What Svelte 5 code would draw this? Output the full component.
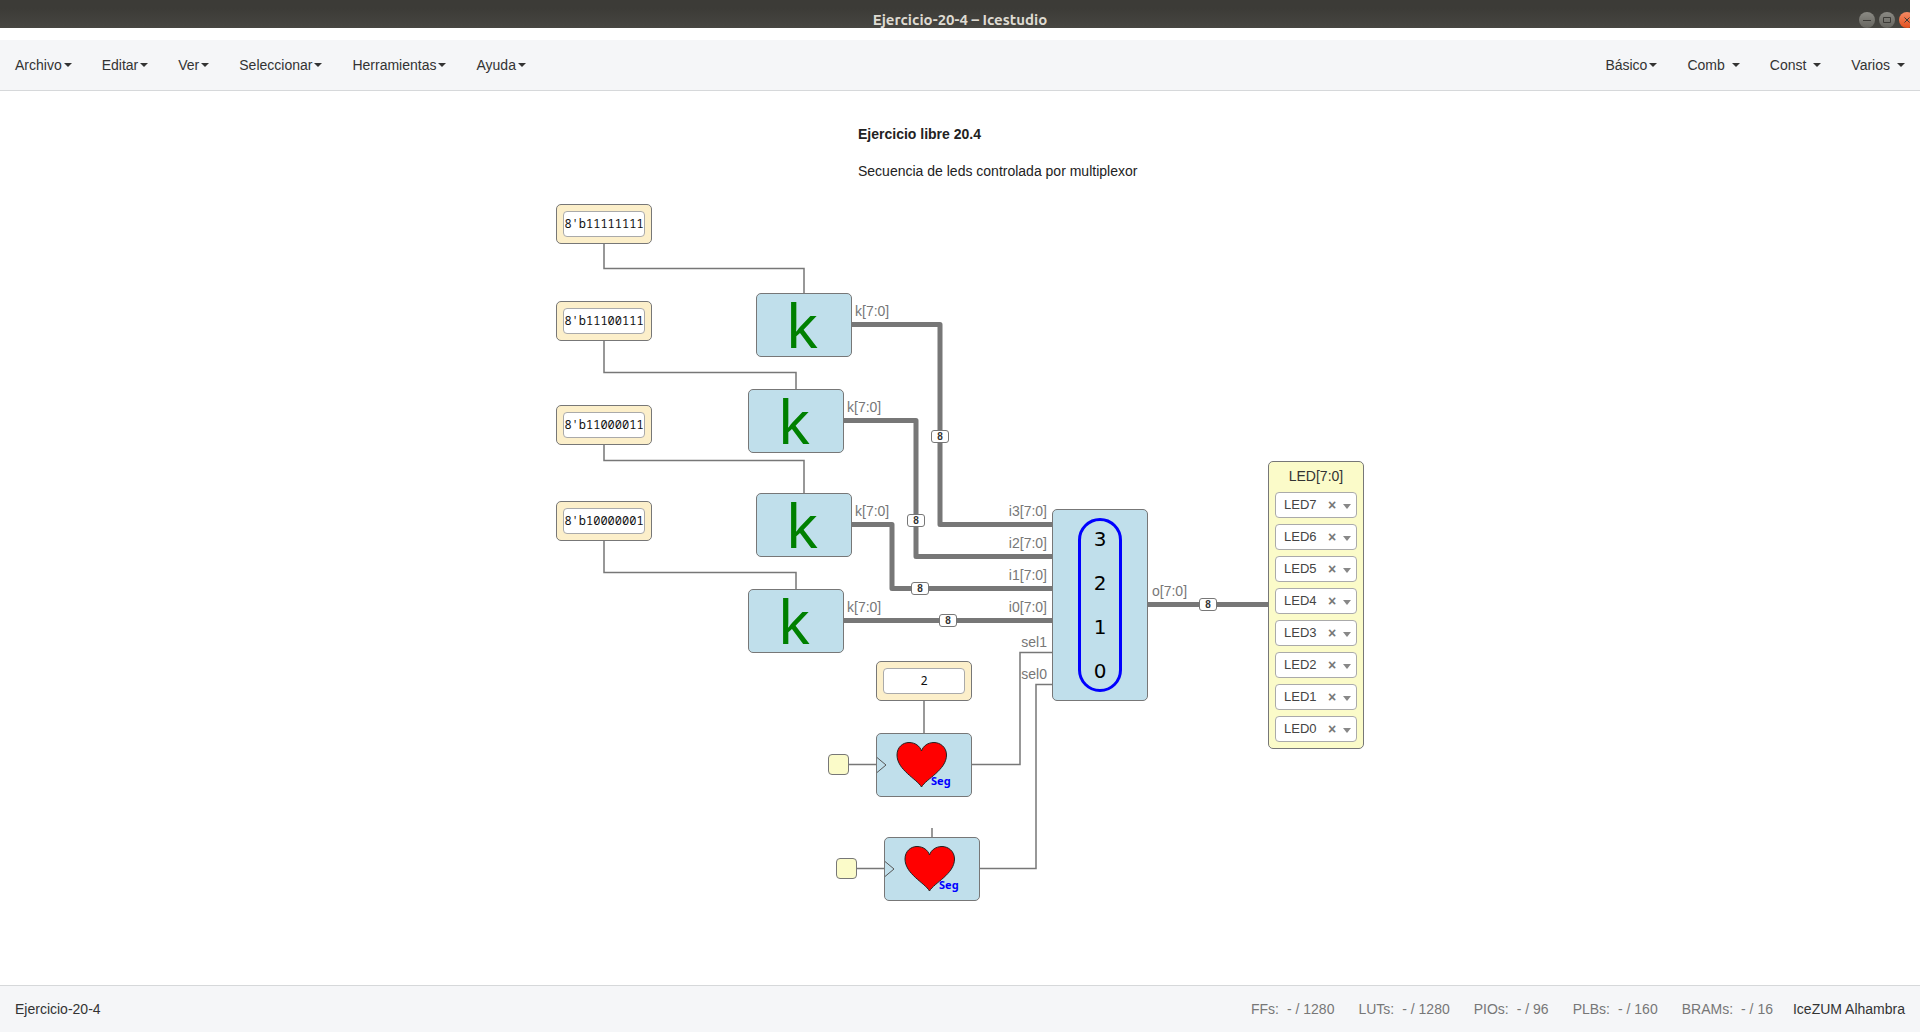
<script>
  const leftMenus = ['Archivo', 'Editar', 'Ver', 'Seleccionar', 'Herramientas', 'Ayuda'];
  const rightMenus = ['Básico', 'Comb', 'Const', 'Varios'];

  const resources = [
    { name: 'FFs', value: '- / 1280' },
    { name: 'LUTs', value: '- / 1280' },
    { name: 'PIOs', value: '- / 96' },
    { name: 'PLBs', value: '- / 160' },
    { name: 'BRAMs', value: '- / 16' }
  ];

  const constants = [
    { x: 0, y: 113, value: "8'b11111111" },
    { x: 0, y: 210, value: "8'b11100111" },
    { x: 0, y: 314, value: "8'b11000011" },
    { x: 0, y: 410, value: "8'b10000001" },
    { x: 320, y: 570, value: '2' }
  ];

  const kBlocks = [
    { x: 200, y: 202 },
    { x: 192, y: 298 },
    { x: 200, y: 402 },
    { x: 192, y: 498 }
  ];

  const hearts = [
    { x: 320, y: 642 },
    { x: 328, y: 746 }
  ];

  const clocks = [
    { x: 272, y: 663 },
    { x: 280, y: 767 }
  ];

  const muxInputs = [
    { text: 'i3[7:0]', y: 410 },
    { text: 'i2[7:0]', y: 442 },
    { text: 'i1[7:0]', y: 474 },
    { text: 'i0[7:0]', y: 506 },
    { text: 'sel1', y: 541 },
    { text: 'sel0', y: 573 }
  ];

  const outputs = [
    { text: 'k[7:0]', x: 299, y: 210 },
    { text: 'k[7:0]', x: 291, y: 306 },
    { text: 'k[7:0]', x: 299, y: 410 },
    { text: 'k[7:0]', x: 291, y: 506 },
    { text: 'o[7:0]', x: 596, y: 490 }
  ];

  const wires = [
    'M48 153V177.500H248V202',
    'M48 250V281.500H240V298',
    'M48 354V369.500H248V402',
    'M48 450V481.500H240V498',
    'M368 610V642',
    'M376 737V746',
    'M292 673.500H320',
    'M300 777.500H328',
    'M416 673.500H464V561.500H496',
    'M424 777.500H480V593.500H496'
  ];

  const buses = [
    'M296 233.500H384V433.500H496',
    'M288 329.500H360V465.500H496',
    'M296 433.500H336V497.500H496',
    'M288 529.500H496',
    'M592 513.500H712'
  ];

  const sizes = [
    { x: 375, y: 339 },
    { x: 351, y: 423 },
    { x: 355, y: 491 },
    { x: 383, y: 523 },
    { x: 643, y: 507 }
  ];

  const leds = [7, 6, 5, 4, 3, 2, 1, 0];
  const ledNames = leds.map((n) => `LED${n}`);
</script>

<div class="app">
  <header class="titlebar">
    <h1>Ejercicio-20-4 – Icestudio</h1>
    <div class="window-buttons">
      <button aria-label="Minimizar">
        <svg viewBox="0 0 16 16"><path d="M4 8.500h8" /></svg>
      </button>
      <button aria-label="Maximizar">
        <svg viewBox="0 0 16 16"><path d="M4.500 5.500h7v5h-7z" /></svg>
      </button>
      <button class="close" aria-label="Cerrar">
        <svg viewBox="0 0 16 16"><path d="M5.500 5.500l5 5M10.500 5.500l-5 5" /></svg>
      </button>
    </div>
  </header>

  <nav class="menubar">
    <div class="menus">
      {#each leftMenus as menu}
        <button>{menu}<span class="caret"></span></button>
      {/each}
    </div>
    <div class="menus right">
      {#each rightMenus as menu}
        <button>{menu}<span class="caret"></span></button>
      {/each}
    </div>
  </nav>

  <main>
    <div class="stage">
      <svg class="wiring" viewBox="0 0 808 894" aria-hidden="true">
        {#each wires as d}<path class="wire" {d} />{/each}
        {#each buses as d}<path class="bus" {d} />{/each}
      </svg>

      <section class="info">
        <h2>Ejercicio libre 20.4</h2>
        <p>Secuencia de leds controlada por multiplexor</p>
      </section>

      {#each sizes as s}
        <span class="size" style:left="{s.x}px" style:top="{s.y}px">8</span>
      {/each}

      {#each constants as c}
        <div class="constant" style:left="{c.x}px" style:top="{c.y}px">
          <input type="text" aria-label="Constante" value={c.value} />
        </div>
      {/each}

      {#each kBlocks as b}
        <div class="block" style:left="{b.x}px" style:top="{b.y}px">
          <span class="k">k</span>
        </div>
      {/each}

      {#each hearts as h}
        <div class="block" style:left="{h.x}px" style:top="{h.y}px">
          <svg class="heart" viewBox="0 0 94 62" aria-hidden="true">
            <path class="clock-mark" d="M0 23.500L9 31 0 38.500" />
            <path
              class="heart-shape"
              d="M44.500 53C40 45 20 36 20 21C20 13 26 8.500 32 8.500C38 8.500 43 12 44.500 17C46 12 51 8.500 57 8.500C63 8.500 69.500 13 69.500 21C69.500 36 49 45 44.500 53Z"
            />
          </svg>
          <span class="seg">Seg</span>
        </div>
      {/each}

      {#each clocks as c}
        <div class="clock" style:left="{c.x}px" style:top="{c.y}px"></div>
      {/each}

      {#each muxInputs as p}
        <span class="port in" style:top="{p.y}px">{p.text}</span>
      {/each}
      {#each outputs as p}
        <span class="port" style:left="{p.x}px" style:top="{p.y}px">{p.text}</span>
      {/each}

      <div class="block mux">
        <div class="oval">
          <span>3</span><span>2</span><span>1</span><span>0</span>
        </div>
      </div>

      <div class="led-block">
        <span class="led-title">LED[7:0]</span>
        {#each ledNames as name}
          <div class="pin">
            <select aria-label={name} value={name}>
              {#each ledNames as option}<option>{option}</option>{/each}
            </select>
            <button aria-label="Quitar {name}">×</button>
            <span class="arrow"></span>
          </div>
        {/each}
      </div>
    </div>
  </main>

  <footer>
    <span>Ejercicio-20-4</span>
    <div class="status">
      <div class="resources">
        {#each resources as r}
          <span class="resource"><span>{r.name}:</span><span>{r.value}</span></span>
        {/each}
      </div>
      <span>IceZUM Alhambra</span>
    </div>
  </footer>
</div>

<style>
  :global(body) {
    margin: 0;
    background: #fff;
  }

  .app,
  .app :is(button, input, select) {
    font-family: 'Liberation Sans', Arial, sans-serif;
    font-size: 14px;
    line-height: 20px;
    color: #333;
    box-sizing: border-box;
  }

  .app {
    min-height: 100vh;
    display: flex;
    flex-direction: column;
  }

  .app button {
    border: 0;
    padding: 0;
    background: none;
  }

  .titlebar {
    display: grid;
    grid-template-columns: 1fr auto 1fr;
    height: 28px;
    margin-right: 10px;
    margin-bottom: 12px;
    padding-left: 10px;
    overflow: hidden;
    background: linear-gradient(#3c3b37, #3c3b37 30%, #474641);
  }

  .titlebar h1 {
    grid-column: 2;
    margin: 10px 0 0;
    font: 700 15px/20px Ubuntu, 'Noto Sans', sans-serif;
    color: #dfdbd2;
    white-space: nowrap;
  }

  .window-buttons {
    display: flex;
    justify-content: flex-end;
    gap: 4px;
    margin: 12px -5px 0 0;
  }

  .app .window-buttons button {
    width: 16px;
    height: 16px;
    border-radius: 50%;
    background: linear-gradient(#8b8a84, #65645e);
  }

  .app .window-buttons .close {
    background: linear-gradient(#f58a64, #e2501f);
  }

  .window-buttons svg {
    display: block;
    fill: none;
    stroke: #3c3b37;
  }

  .menubar {
    display: flex;
    justify-content: space-between;
    padding: 15px;
    background: #f5f6f8;
    border-bottom: 1px solid #d6d8da;
  }

  .menus {
    display: flex;
    gap: 30px;
  }

  .menus button {
    display: flex;
    align-items: center;
    gap: 2px;
  }

  .menus.right button:not(:first-child) {
    gap: 7px;
  }

  .caret {
    border: 4px solid transparent;
    border-top-color: #333;
    border-bottom: 0;
  }

  main {
    flex: 1;
    overflow: hidden;
  }

  .stage {
    position: relative;
    width: 808px;
    height: 894px;
    margin: 0 auto;
  }

  .stage > * {
    position: absolute;
    box-sizing: border-box;
  }

  .wiring {
    inset: 0;
    fill: none;
    stroke: #777;
  }

  .wire {
    stroke-width: 1.5;
  }

  .bus {
    stroke-width: 5;
    stroke-linejoin: round;
  }

  .info {
    left: 302px;
    top: 33px;
    white-space: nowrap;
    color: #222;
  }

  .info h2 {
    margin: 0 0 17px;
    font-size: 14px;
  }

  .info p {
    margin: 0;
  }

  .size {
    width: 18px;
    height: 13px;
    border: 1px solid #777;
    border-radius: 3px;
    background: #fff;
    font: 700 10px/11px 'Liberation Sans', sans-serif;
    text-align: center;
  }

  .constant {
    width: 96px;
    height: 40px;
    padding: 6px;
    border: 1px solid #777;
    border-radius: 5px;
    background: #fcefca;
  }

  .app .constant input {
    display: block;
    width: 100%;
    height: 26px;
    padding: 0 0 2px;
    border: 1px solid #aaa;
    border-radius: 4px;
    background: #fff;
    font-family: 'Noto Sans Mono', 'DejaVu Sans Mono', monospace;
    font-size: 12px;
    color: #111;
    text-align: center;
  }

  .block {
    width: 96px;
    height: 64px;
    border: 1px solid #777;
    border-radius: 5px;
    background: #c0dfeb;
  }

  .k {
    display: block;
    padding-right: 4px;
    font: 60px/62px 'Noto Sans', sans-serif;
    color: green;
    text-align: center;
  }

  .heart {
    display: block;
  }

  .clock-mark {
    fill: none;
    stroke: #555;
  }

  .heart-shape {
    fill: red;
    stroke: #222;
  }

  .seg {
    position: absolute;
    left: 54px;
    top: 40px;
    font: 700 11px/14px 'Noto Sans', sans-serif;
    color: blue;
  }

  .clock {
    width: 21px;
    height: 21px;
    border: 1px solid #777;
    border-radius: 4px;
    background: #fbfbc9;
  }

  .port {
    color: #777;
    white-space: nowrap;
  }

  .port.in {
    right: 317px;
  }

  .mux {
    left: 496px;
    top: 418px;
    height: 192px;
    display: grid;
    place-items: center;
  }

  .oval {
    box-sizing: border-box;
    width: 44px;
    height: 174px;
    border: 3px solid blue;
    border-radius: 22px;
    display: flex;
    flex-direction: column;
    justify-content: center;
    align-items: center;
    font: 20px/44px 'DejaVu Sans', sans-serif;
    color: #000;
  }

  .led-block {
    left: 712px;
    top: 370px;
    width: 96px;
    display: flex;
    flex-direction: column;
    gap: 6px;
    padding: 4px 6px 6px;
    border: 1px solid #777;
    border-radius: 5px;
    background: #fbfbc9;
  }

  .led-title {
    text-align: center;
  }

  .pin {
    display: grid;
    grid-template-columns: 1fr 10px 20px;
    align-items: center;
  }

  .app .pin select {
    grid-area: 1 / 1 / 2 / 4;
    height: 26px;
    padding: 0 8px;
    appearance: none;
    border: 1px solid #aaa;
    border-radius: 4px;
    background: #fff;
    font-size: 13px;
    color: #444;
  }

  .app .pin button {
    grid-area: 1 / 2;
    font-size: 14px;
    font-weight: 700;
    color: #777;
  }

  .arrow {
    grid-area: 1 / 3;
    justify-self: center;
    margin-top: 3px;
    border: 4px solid transparent;
    border-top: 5px solid #888;
    border-bottom: 0;
    pointer-events: none;
  }

  footer {
    display: flex;
    justify-content: space-between;
    padding: 13px 15px;
    background: #f5f6f8;
    border-top: 1px solid #d6d8da;
  }

  .status {
    display: flex;
    gap: 20px;
  }

  .resources {
    display: flex;
    gap: 24px;
    color: #777;
  }

  .resource {
    display: flex;
    gap: 8px;
  }
</style>
